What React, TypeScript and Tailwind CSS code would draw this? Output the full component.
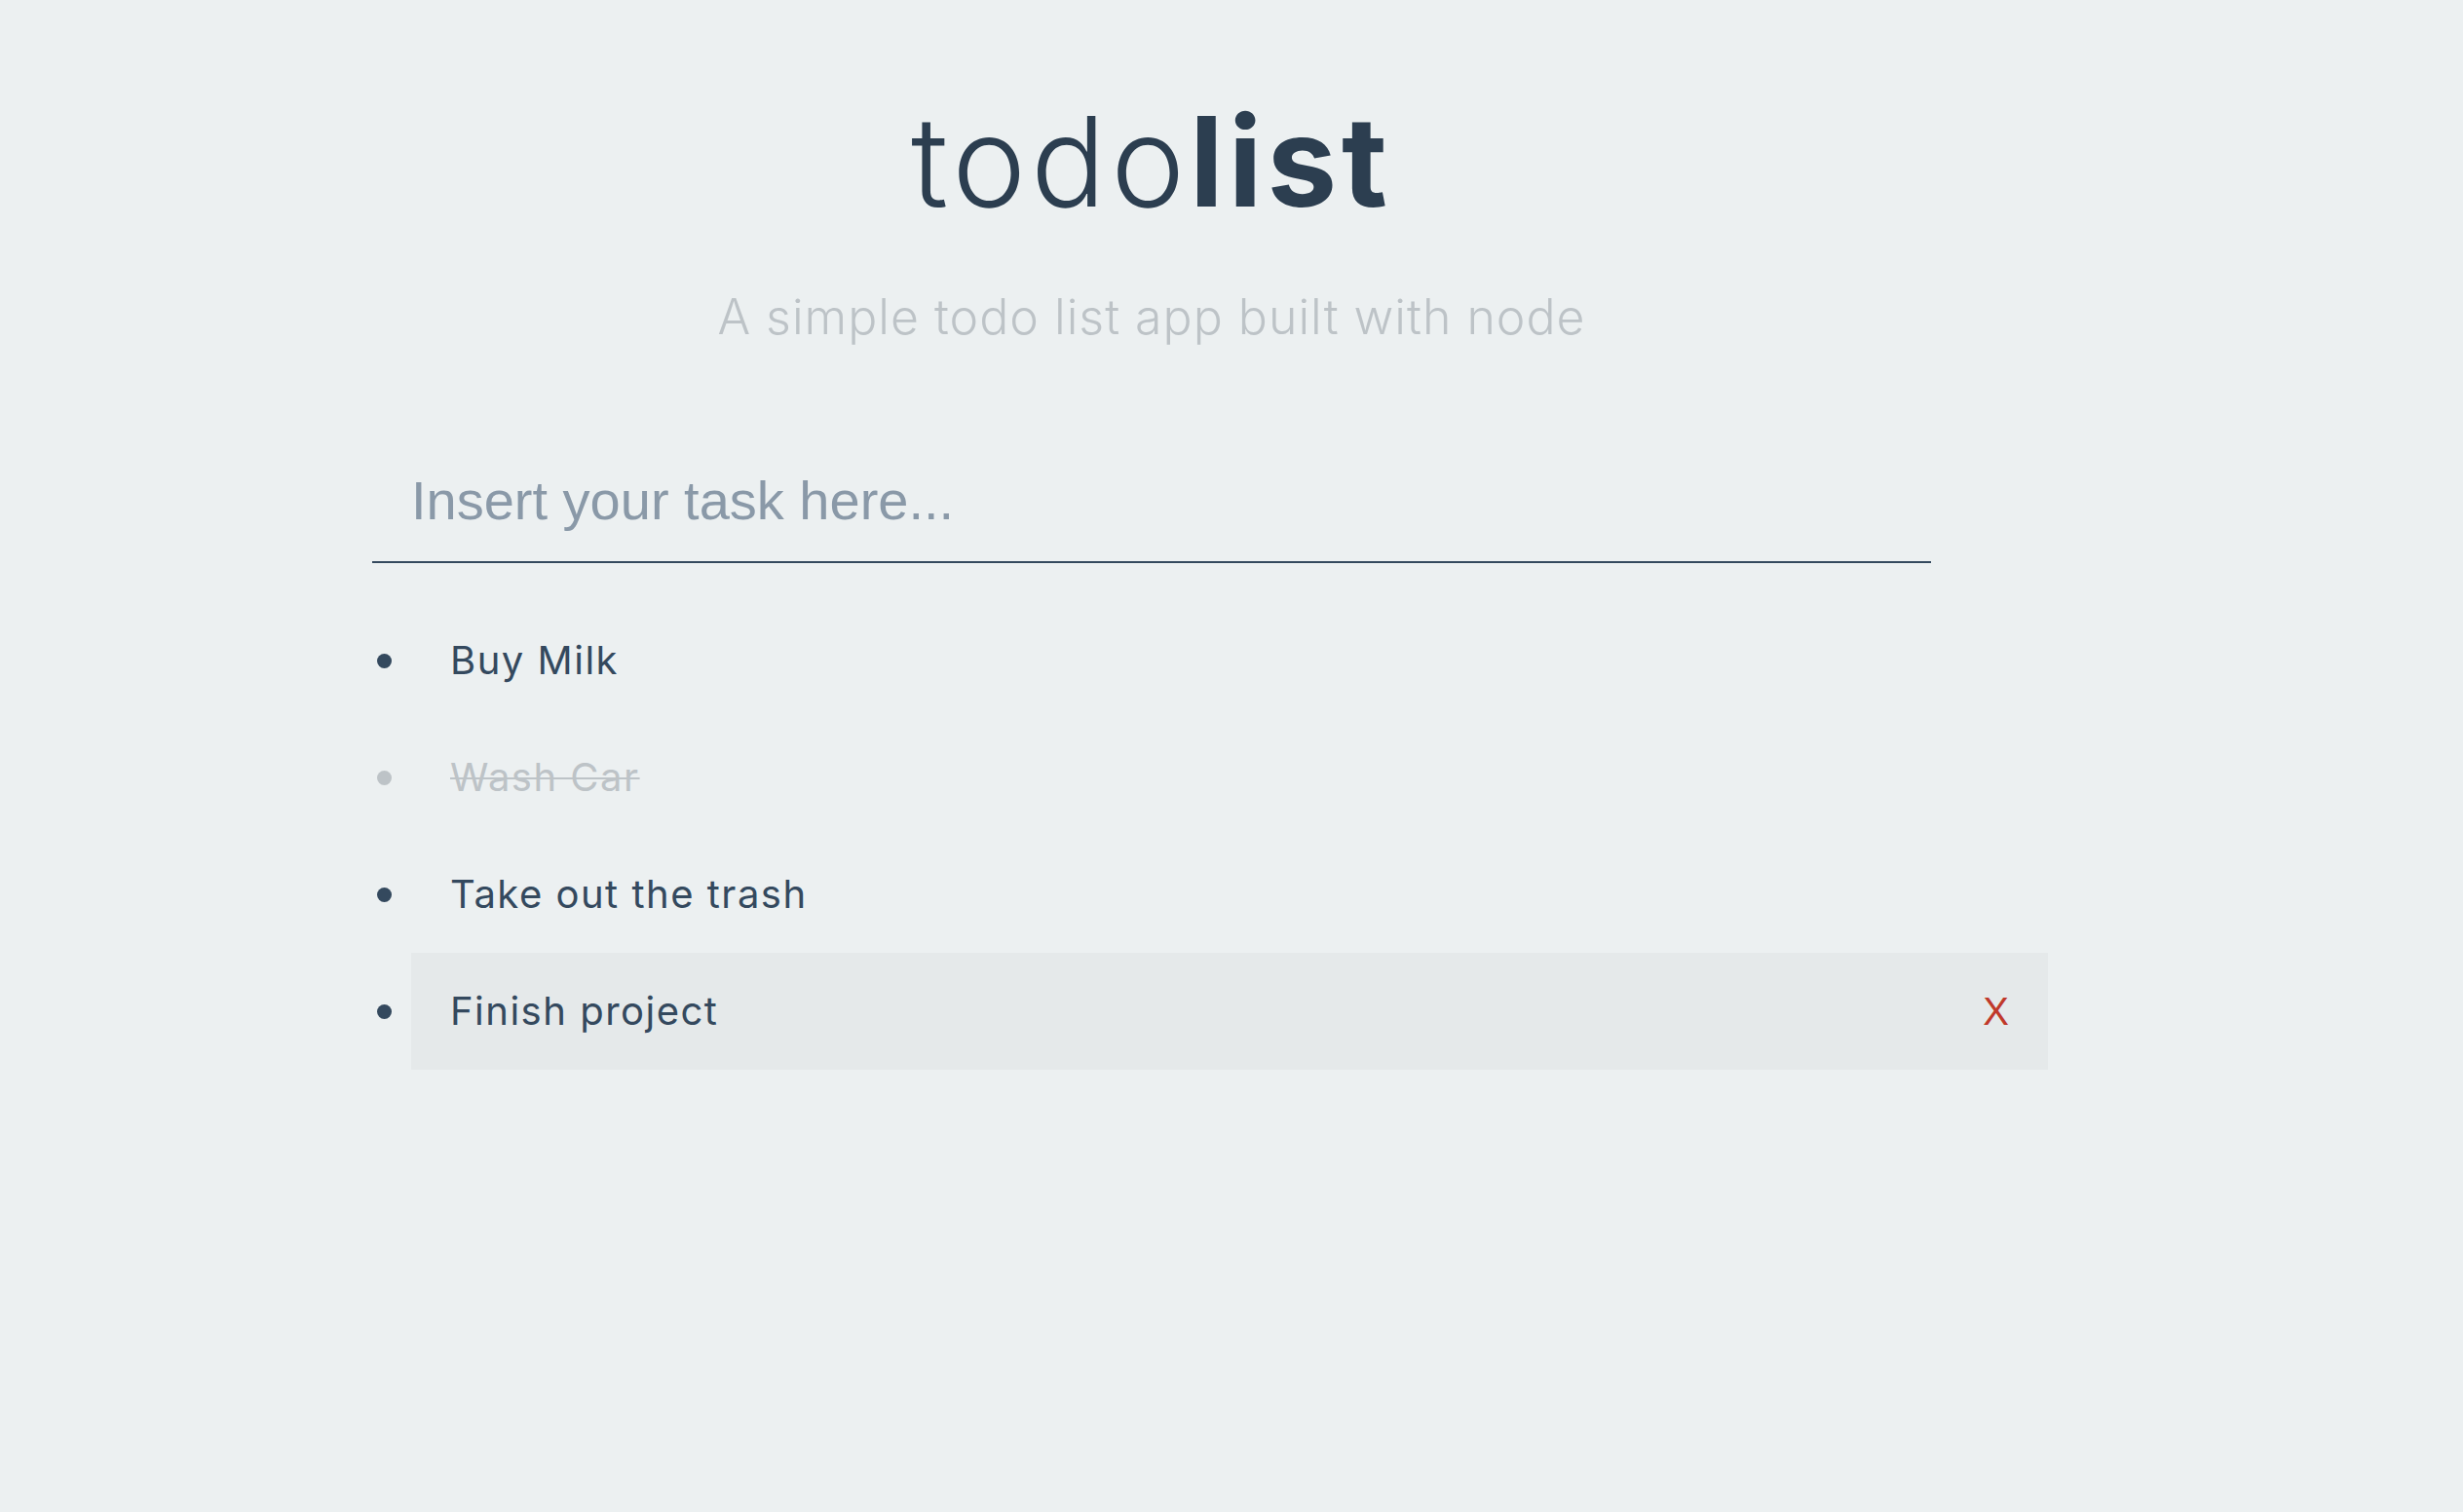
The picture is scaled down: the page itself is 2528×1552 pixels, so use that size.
import React from "react";

const items = [
  { text: "Buy Milk", done: false, hover: false },
  { text: "Wash Car", done: true, hover: false },
  { text: "Take out the trash", done: false, hover: false },
  { text: "Finish project", done: false, hover: true },
];

export default function App() {
  return (
    <div className="min-h-screen w-full bg-[#ecf0f1] font-['Inter','Noto_Sans',sans-serif]">
      <div className="pl-[382px] pt-[102px]">
        <div className="w-[1600px]">
          <h1 className="text-center text-[128px] leading-none tracking-[5px] text-[#2c3e50]">
            <span className="font-light">todo</span>
            <span className="font-bold">list</span>
          </h1>
          <p className="mt-[70px] text-center text-[50px] leading-none font-light tracking-[1px] text-[#bdc3c7]">
            A simple todo list app built with node
          </p>
          <input
            type="text"
            placeholder="Insert your task here..."
            className="mt-[101px] box-border block h-[127px] w-full border-b-2 border-[#34495e] bg-transparent pl-10 font-['Liberation_Sans',Arial,sans-serif] text-[56px] text-[#34495e] outline-none placeholder:text-[#8a99a8]"
          />
        </div>
        <ul className="mt-[40px] w-[1720px]">
          {items.map((it) => (
            <li key={it.text} className="flex h-[120px] items-center">
              <div className="flex w-10 shrink-0 items-center">
                <span
                  className={
                    it.done
                      ? "ml-[5px] block h-[15px] w-[15px] rounded-full bg-[#bdc3c7]"
                      : "ml-[5px] block h-[15px] w-[15px] rounded-full bg-[#34495e]"
                  }
                />
              </div>
              <div
                className={
                  it.hover
                    ? "flex h-full flex-1 items-center justify-between bg-[#e5e9ea] px-10"
                    : "flex h-full flex-1 items-center justify-between px-10"
                }
              >
                <span
                  className={
                    it.done
                      ? "text-[40px] leading-none tracking-[1.5px] text-[#bdc3c7] line-through decoration-2"
                      : "text-[40px] leading-none tracking-[1.5px] text-[#34495e]"
                  }
                >
                  {it.text}
                </span>
                {it.hover && (
                  <span className="font-['Liberation_Sans',Arial,sans-serif] text-[40px] leading-none text-[#c0392b]">
                    X
                  </span>
                )}
              </div>
            </li>
          ))}
        </ul>
      </div>
    </div>
  );
}
